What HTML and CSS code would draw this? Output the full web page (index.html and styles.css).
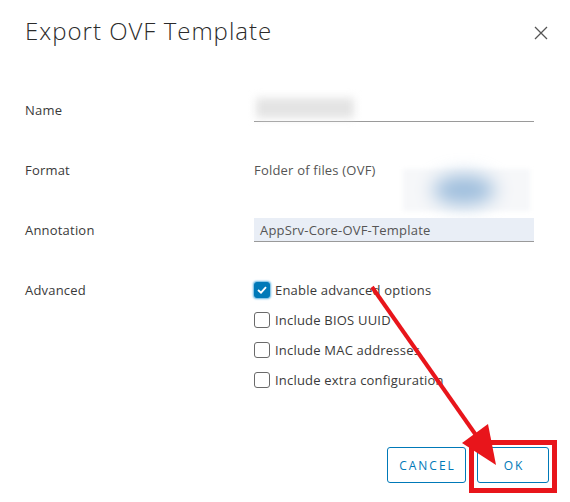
FILE: index.html
```html
<!DOCTYPE html>
<html>
<head>
<meta charset="utf-8">
<link rel="stylesheet" href="styles.css">
</head>
<body>
<div class="dialog">
  <div class="header">
    <h1 class="title">Export OVF Template</h1>
    <button class="close" aria-label="Close">
      <svg width="14" height="14" viewBox="0 0 14 14"><path d="M1 1 L13 13 M13 1 L1 13" stroke="#555" stroke-width="1.3" fill="none"/></svg>
    </button>
  </div>
  <div class="form">
    <div class="row">
      <div class="label">Name</div>
      <div class="value"><div class="input name-input"><span class="blur-grey"></span></div></div>
    </div>
    <div class="row">
      <div class="label">Format</div>
      <div class="value"><span class="static">Folder of files (OVF)</span><span class="blur-blue"><span class="blur-spot"></span></span></div>
    </div>
    <div class="row">
      <div class="label">Annotation</div>
      <div class="value"><div class="input annot-input">AppSrv-Core-OVF-Template</div></div>
    </div>
    <div class="row advanced">
      <div class="label">Advanced</div>
      <div class="value checks">
        <label class="check"><span class="box checked"><svg width="10" height="8" viewBox="0 0 10 8"><path d="M1 4 L4 6.6 L9 1.2" stroke="#fff" stroke-width="1.9" fill="none"/></svg></span>Enable advanced options</label>
        <label class="check"><span class="box"></span>Include BIOS UUID</label>
        <label class="check"><span class="box"></span>Include MAC addresses</label>
        <label class="check"><span class="box"></span>Include extra configuration</label>
      </div>
    </div>
  </div>
  <div class="footer">
    <button class="btn cancel">CANCEL</button>
    <button class="btn ok">OK</button>
  </div>
</div>
<div class="highlight"></div>
<svg class="arrow" width="570" height="502" viewBox="0 0 570 502">
  <line x1="372" y1="287" x2="478" y2="438" stroke="#e8151b" stroke-width="4"/>
  <polygon points="496,465 462,443 488,424" fill="#e8151b"/>
</svg>
</body>
</html>
```
FILE: styles.css
```css
html, body {
  margin: 0;
  padding: 0;
  background: #fff;
}
body {
  font-family: "Open Sans", "Liberation Sans", sans-serif;
  color: #333;
  width: 570px;
  height: 502px;
  overflow: hidden;
  position: relative;
}
.dialog {
  padding: 0 21px 0 25px;
}
.header {
  height: 80px;
  display: flex;
  align-items: flex-start;
  justify-content: space-between;
}
.title {
  margin: 15px 0 0 0;
  font-size: 24px;
  font-weight: 300;
  line-height: 32px;
  color: #2b2b2b;
  letter-spacing: 1px;
}
.close {
  margin: 25px 0 0 0;
  padding: 0;
  border: none;
  background: none;
  width: 16px;
  height: 16px;
  display: flex;
  align-items: center;
  justify-content: center;
}
.form {
  display: flex;
  flex-direction: column;
}
.row {
  display: grid;
  grid-template-columns: 229px 280px;
  height: 60px;
  align-items: center;
}
.label {
  font-size: 13px;
  color: #3a3a3a;
  letter-spacing: 0.2px;
}
.value {
  position: relative;
  font-size: 13px;
  letter-spacing: 0.2px;
}
.input {
  height: 23px;
  border-bottom: 1px solid #9a9a9a;
  box-sizing: content-box;
  display: flex;
  align-items: center;
}
.name-input {
  position: relative;
}
.blur-grey {
  display: block;
  width: 98px;
  height: 20px;
  margin-left: 2px;
  margin-top: -4px;
  background: #e4e4e4;
  filter: blur(4px);
}
.static {
  color: #555;
}
.blur-blue {
  position: absolute;
  left: 149px;
  top: 8px;
  width: 127px;
  height: 42px;
  background: #f6f7f9;
  filter: blur(2px);
}
.blur-spot {
  position: absolute;
  left: 30px;
  top: 6px;
  width: 62px;
  height: 30px;
  border-radius: 50%;
  background: #9dbddc;
  filter: blur(9px);
}
.annot-input {
  background: #e9eef6;
  padding-left: 6px;
  color: #555;
}
.advanced {
  height: auto;
  align-items: start;
  padding-top: 15px;
}
.advanced .label {
  line-height: 30px;
}
.checks {
  display: flex;
  flex-direction: column;
}
.check {
  height: 30px;
  display: flex;
  align-items: center;
  gap: 5px;
  color: #3a3a3a;
}
.box {
  width: 14px;
  height: 14px;
  border: 1px solid #6a6a6a;
  border-radius: 3px;
  display: flex;
  align-items: center;
  justify-content: center;
  background: #fff;
}
.box.checked {
  background: #0079b8;
  border-color: #0079b8;
  box-shadow: 0 0 2px 1px #62b3e0;
}
.footer {
  display: flex;
  justify-content: flex-end;
  gap: 11px;
  margin-top: 52px;
}
.btn {
  height: 36px;
  border: 1px solid #0079b8;
  border-radius: 3px;
  background: #fff;
  color: #0079b8;
  font-family: "Open Sans", "Liberation Sans", sans-serif;
  font-size: 12px;
  font-weight: 500;
  letter-spacing: 2px;
  padding: 0 0 0 2px;
}
.cancel { width: 79px; }
.ok { width: 72px; }
.highlight {
  position: absolute;
  left: 469px;
  top: 440px;
  width: 78px;
  height: 43px;
  border: 5px solid #e8151b;
}
.arrow {
  position: absolute;
  left: 0;
  top: 0;
  pointer-events: none;
}
```
